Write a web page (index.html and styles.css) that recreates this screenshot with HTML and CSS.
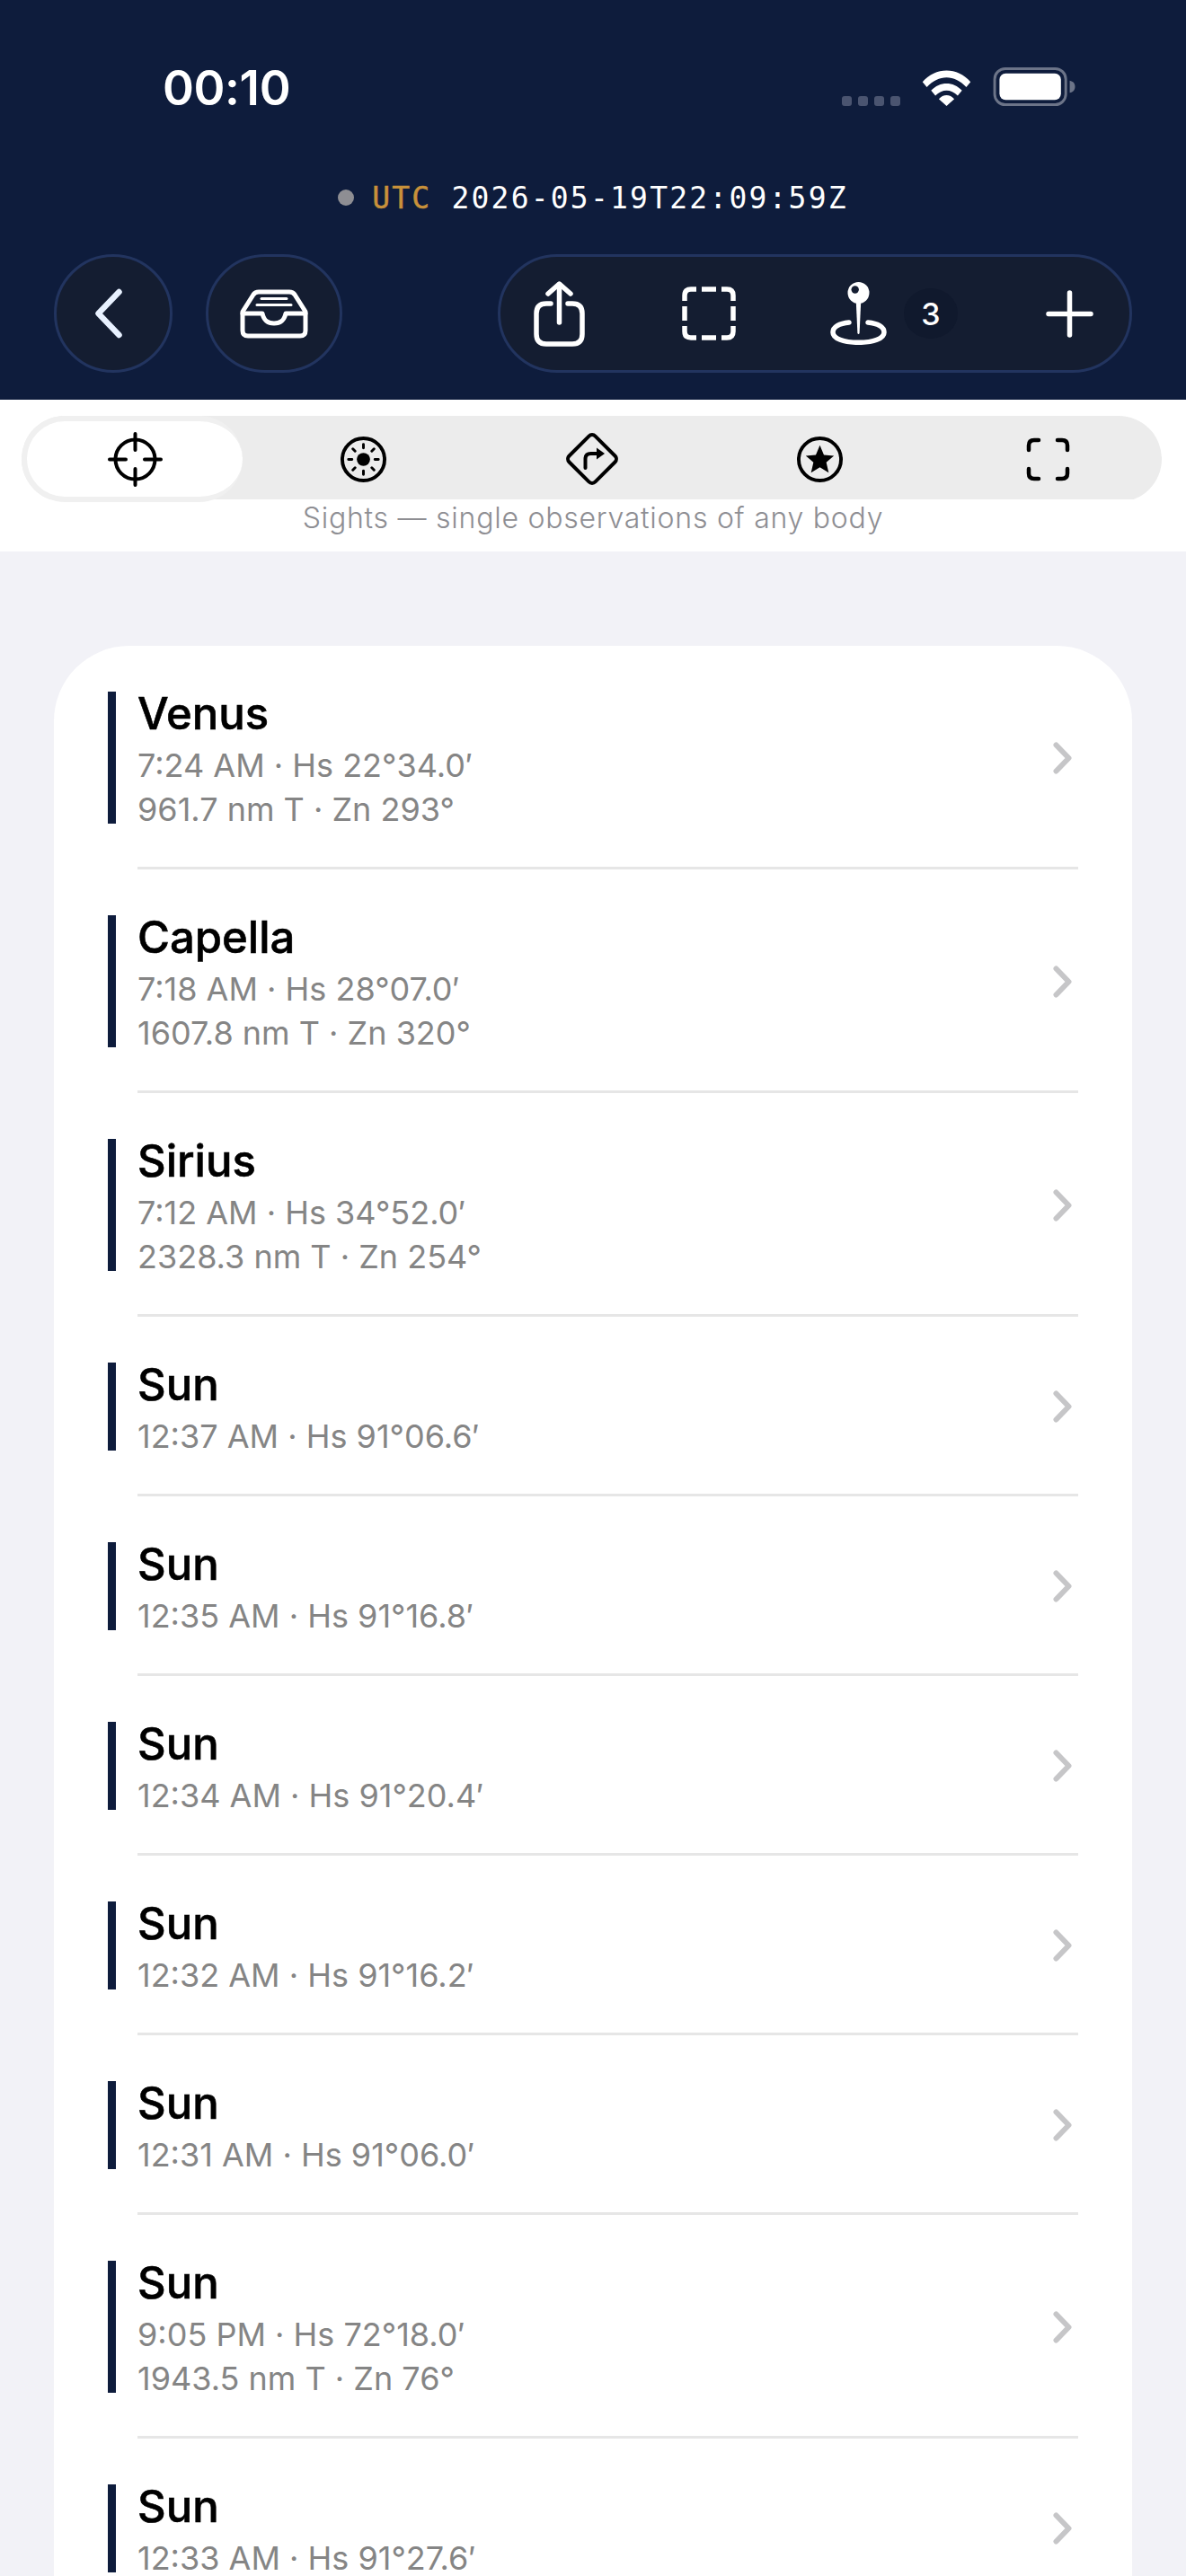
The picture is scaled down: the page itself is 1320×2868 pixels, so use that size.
FILE: index.html
```html
<!doctype html>
<html>
  <head>
    <title>Sights</title>
    <link rel="stylesheet" href="styles.css">
  </head>
  <body>
    <header class="top">
      <div class="status">
        <span class="clock">00:10</span>
        <div class="status-icons">
          <svg width="65" height="11" viewBox="0 0 65 11"><g fill="#4a5470"><rect x="0" y="0" width="11" height="11" rx="3"/><rect x="18" y="0" width="11" height="11" rx="3"/><rect x="36" y="0" width="11" height="11" rx="3"/><rect x="54" y="0" width="11" height="11" rx="3"/></g></svg>
          <svg width="57" height="42" viewBox="0 0 58 44"><path d="M1 16 C16 -2 42 -2 57 16 L52 22 C38 7 20 7 6 22 Z M11 26 C21 15 37 15 47 26 L42 32 C34 24 24 24 16 32 Z M20 36 C25 30 33 30 38 36 L29 44 Z" fill="#fff"/></svg>
          <svg width="93" height="43" viewBox="0 0 94 44"><rect x="1.5" y="1.5" width="81" height="41" rx="12" fill="none" stroke="#6c7488" stroke-width="3"/><rect x="7" y="7" width="70" height="30" rx="7" fill="#fff"/><path d="M87 15 C91 16 93 18 93 22 C93 26 91 28 87 29 Z" fill="#6c7488"/></svg>
        </div>
      </div>
      <div class="utc">
        <span class="utc-dot"></span>
        <span class="utc-text"><span class="utc-label">UTC</span> 2026-05-19T22:09:59Z</span>
      </div>
      <div class="toolbar">
        <button class="glass back">
          <svg width="32" height="56" viewBox="0 0 32 56"><path d="M27.5 4 L4.5 28 L27.5 52" fill="none" stroke="#e8f1ff" stroke-width="6.5" stroke-linecap="round" stroke-linejoin="round"/></svg>
        </button>
        <button class="glass inbox">
          <svg width="76" height="55" viewBox="0 0 76 55"><g fill="none" stroke="#fff" stroke-width="5" stroke-linecap="round" stroke-linejoin="round"><path d="M3 25 L15 6 Q17 3 21 3 H55 Q59 3 61 6 L73 25 V46 Q73 52 67 52 H9 Q3 52 3 46 Z"/><path d="M3 27 H25 C27 36 32 38 38 38 C44 38 49 36 51 27 H73"/></g><g stroke="#fff" stroke-width="3" stroke-linecap="round"><path d="M24 10.5 H52"/><path d="M19 17.5 H57"/></g></svg>
        </button>
        <div class="glass tools">
          <svg width="57" height="73" viewBox="0 0 57 73"><g fill="none" stroke="#fff" stroke-width="5.5" stroke-linecap="round" stroke-linejoin="round"><path d="M19 25 H14 Q3 25 3 36 V59 Q3 70 14 70 H43 Q54 70 54 59 V36 Q54 25 43 25 H38"/><path d="M28.5 46 V4"/><path d="M16 14 L28.5 3 L41 14"/></g></svg>
          <svg class="tool-dash" width="60" height="60" viewBox="0 0 60 60"><g fill="none" stroke="#fff" stroke-width="5.5"><path d="M3 16 V10 Q3 3 10 3 H16"/><path d="M22 3 H38"/><path d="M44 3 H50 Q57 3 57 10 V16"/><path d="M57 22 V38"/><path d="M57 44 V50 Q57 57 50 57 H44"/><path d="M38 57 H22"/><path d="M16 57 H10 Q3 57 3 50 V44"/><path d="M3 38 V22"/></g></svg>
          <div class="tool-pin">
            <svg width="63" height="70" viewBox="0 0 63 70"><circle cx="31.5" cy="12" r="12" fill="#fff"/><circle cx="27.7" cy="8.5" r="4.2" fill="#141d31"/><path d="M28.7 20 H34.3 L32.6 57 Q31.5 59 30.4 57 Z" fill="#fff"/><path d="M21 45 C10 46 3 50 3 56 C3 63 15 67.3 31.5 67.3 C48 67.3 60 63 60 56 C60 50 53 46 42 45" fill="none" stroke="#fff" stroke-width="5.5" stroke-linecap="round"/></svg>
            <span class="pin-count">3</span>
          </div>
          <svg class="tool-plus" width="53" height="53" viewBox="0 0 53 53"><path d="M26.5 3 V50 M3 26.5 H50" stroke="#fff" stroke-width="5.5" stroke-linecap="round"/></svg>
        </div>
      </div>
    </header>

    <section class="picker">
      <div class="tabs">
        <div class="tab tab-on">
          <svg width="61" height="61" viewBox="0 0 61 61"><g fill="none" stroke="#000" stroke-width="4" stroke-linecap="round"><circle cx="30.5" cy="30.5" r="22"/><path d="M30.5 2 V20 M30.5 41 V59 M2 30.5 H20 M41 30.5 H59"/></g></svg>
        </div>
        <div class="tab">
          <svg width="51" height="51" viewBox="0 0 52 52"><circle cx="26" cy="26" r="24" fill="none" stroke="#000" stroke-width="4"/><circle cx="26" cy="26" r="7.5" fill="#000"/><path d="M26 9 V13 M26 39 V43 M9 26 H13 M39 26 H43 M14 14 L16.5 16.5 M35.5 35.5 L38 38 M38 14 L35.5 16.5 M16.5 35.5 L14 38" stroke="#000" stroke-width="3" stroke-linecap="round"/></svg>
        </div>
        <div class="tab">
          <svg width="58" height="58" viewBox="0 0 58 58"><g fill="none" stroke="#000" stroke-linejoin="round" stroke-linecap="round" stroke-width="4"><rect x="8.5" y="8.5" width="41" height="41" rx="5" transform="rotate(45 29 29)"/><path d="M21.5 39 V29 Q21.5 23 27.5 23 H36"/></g><path d="M34 16.5 L43 23 L34 29.5 Z" fill="#000"/></svg>
        </div>
        <div class="tab">
          <svg width="51" height="51" viewBox="0 0 52 52"><circle cx="26" cy="26" r="24" fill="none" stroke="#000" stroke-width="4"/><path d="M26 10 L30.6 20.8 L42 21.8 L33.3 29.4 L36 41 L26 35 L16 41 L18.7 29.4 L10 21.8 L21.4 20.8 Z" fill="#000"/></svg>
        </div>
        <div class="tab">
          <svg width="49" height="49" viewBox="0 0 49 49"><g fill="none" stroke="#000" stroke-width="4.5" stroke-linecap="round"><path d="M3 14 V9 Q3 3 9 3 H14"/><path d="M35 3 H40 Q46 3 46 9 V14"/><path d="M46 35 V40 Q46 46 40 46 H35"/><path d="M14 46 H9 Q3 46 3 40 V35"/></g></svg>
        </div>
      </div>
      <p class="hint">Sights — single observations of any body</p>
    </section>

    <main class="content">
      <ul class="card">
        <li class="row"><span class="bar"></span><div class="row-text"><div class="name">Venus</div><div class="meta">7:24 AM · Hs 22°34.0′</div><div class="meta">961.7 nm T · Zn 293°</div></div><svg class="chev" width="21" height="36" viewBox="0 0 21 36"><path d="M3.5 3.5 L17.5 18 L3.5 32.5" fill="none" stroke="#c6c6c8" stroke-width="6" stroke-linecap="round" stroke-linejoin="round"/></svg></li>
        <li class="row"><span class="bar"></span><div class="row-text"><div class="name">Capella</div><div class="meta">7:18 AM · Hs 28°07.0′</div><div class="meta">1607.8 nm T · Zn 320°</div></div><svg class="chev" width="21" height="36" viewBox="0 0 21 36"><path d="M3.5 3.5 L17.5 18 L3.5 32.5" fill="none" stroke="#c6c6c8" stroke-width="6" stroke-linecap="round" stroke-linejoin="round"/></svg></li>
        <li class="row"><span class="bar"></span><div class="row-text"><div class="name">Sirius</div><div class="meta">7:12 AM · Hs 34°52.0′</div><div class="meta">2328.3 nm T · Zn 254°</div></div><svg class="chev" width="21" height="36" viewBox="0 0 21 36"><path d="M3.5 3.5 L17.5 18 L3.5 32.5" fill="none" stroke="#c6c6c8" stroke-width="6" stroke-linecap="round" stroke-linejoin="round"/></svg></li>
        <li class="row"><span class="bar"></span><div class="row-text"><div class="name">Sun</div><div class="meta">12:37 AM · Hs 91°06.6′</div></div><svg class="chev" width="21" height="36" viewBox="0 0 21 36"><path d="M3.5 3.5 L17.5 18 L3.5 32.5" fill="none" stroke="#c6c6c8" stroke-width="6" stroke-linecap="round" stroke-linejoin="round"/></svg></li>
        <li class="row"><span class="bar"></span><div class="row-text"><div class="name">Sun</div><div class="meta">12:35 AM · Hs 91°16.8′</div></div><svg class="chev" width="21" height="36" viewBox="0 0 21 36"><path d="M3.5 3.5 L17.5 18 L3.5 32.5" fill="none" stroke="#c6c6c8" stroke-width="6" stroke-linecap="round" stroke-linejoin="round"/></svg></li>
        <li class="row"><span class="bar"></span><div class="row-text"><div class="name">Sun</div><div class="meta">12:34 AM · Hs 91°20.4′</div></div><svg class="chev" width="21" height="36" viewBox="0 0 21 36"><path d="M3.5 3.5 L17.5 18 L3.5 32.5" fill="none" stroke="#c6c6c8" stroke-width="6" stroke-linecap="round" stroke-linejoin="round"/></svg></li>
        <li class="row"><span class="bar"></span><div class="row-text"><div class="name">Sun</div><div class="meta">12:32 AM · Hs 91°16.2′</div></div><svg class="chev" width="21" height="36" viewBox="0 0 21 36"><path d="M3.5 3.5 L17.5 18 L3.5 32.5" fill="none" stroke="#c6c6c8" stroke-width="6" stroke-linecap="round" stroke-linejoin="round"/></svg></li>
        <li class="row"><span class="bar"></span><div class="row-text"><div class="name">Sun</div><div class="meta">12:31 AM · Hs 91°06.0′</div></div><svg class="chev" width="21" height="36" viewBox="0 0 21 36"><path d="M3.5 3.5 L17.5 18 L3.5 32.5" fill="none" stroke="#c6c6c8" stroke-width="6" stroke-linecap="round" stroke-linejoin="round"/></svg></li>
        <li class="row"><span class="bar"></span><div class="row-text"><div class="name">Sun</div><div class="meta">9:05 PM · Hs 72°18.0′</div><div class="meta">1943.5 nm T · Zn 76°</div></div><svg class="chev" width="21" height="36" viewBox="0 0 21 36"><path d="M3.5 3.5 L17.5 18 L3.5 32.5" fill="none" stroke="#c6c6c8" stroke-width="6" stroke-linecap="round" stroke-linejoin="round"/></svg></li>
        <li class="row"><span class="bar"></span><div class="row-text"><div class="name">Sun</div><div class="meta">12:33 AM · Hs 91°27.6′</div></div><svg class="chev" width="21" height="36" viewBox="0 0 21 36"><path d="M3.5 3.5 L17.5 18 L3.5 32.5" fill="none" stroke="#c6c6c8" stroke-width="6" stroke-linecap="round" stroke-linejoin="round"/></svg></li>
      </ul>
    </main>
  </body>
</html>
```

FILE: styles.css
```css
* { margin: 0; padding: 0; box-sizing: border-box; }
html, body { height: 2868px; overflow: hidden; }
body { font-family: Inter, "Liberation Sans", sans-serif; background: #f2f2f7; color: #000; }

/* Header */
.top { height: 445px; background: #0e1c3c; color: #fff; padding: 0 60px; display: flex; flex-direction: column; }

.status { height: 195px; display: flex; align-items: center; justify-content: space-between; padding: 0 62px 0 121px; }
.clock { font-size: 53px; font-weight: 600; letter-spacing: -0.4px; }
.status-icons { display: flex; align-items: flex-end; gap: 23px; margin-bottom: 2px; }

.utc { display: flex; align-items: center; justify-content: center; gap: 20px; height: 50px; margin-bottom: 38px; }
.utc-dot { width: 18px; height: 18px; border-radius: 50%; background: #8e8e93; }
.utc-text { font-family: "DejaVu Sans Mono", "Liberation Mono", monospace; font-size: 33px; letter-spacing: 2.2px; }
.utc-label { color: #c8913a; -webkit-text-stroke: 0.5px #c8913a; }

.toolbar { display: flex; align-items: stretch; gap: 37px; height: 132px; }
.glass { background: #141d31; border: 3px solid #22345f; display: flex; align-items: center; border-radius: 66px; }
button.glass { justify-content: center; }
.back { width: 132px; padding-right: 10px; }
.inbox { width: 152px; }
.tools { margin-left: auto; width: 706px; padding-left: 37px; }
.tool-dash { margin-left: 108px; }
.tool-pin { display: flex; align-items: center; gap: 19px; margin-left: 105px; }
.tool-plus { margin-left: 98px; }
.pin-count { width: 60px; height: 56px; border-radius: 50%; background: #10192d; display: flex; align-items: center; justify-content: center; font-size: 34px; font-weight: 500; }

/* Picker */
.picker { background: #fff; height: 169px; padding: 18px 27px 0 24px; }
.tabs { display: flex; height: 96px; background: #ececec; border-radius: 48px; }
.tab { flex: 1; display: flex; align-items: center; justify-content: center; }
.tab-on { flex: 0 0 246px; margin-right: 8px; background: #fff; border: 6px solid #f0f0f0; border-right: 0; border-radius: 48px; }
.hint { margin: -3px -27px 0 -24px; background: #fff; text-align: center; color: #8e8e93; font-size: 32px; line-height: 42px; letter-spacing: 0.75px; font-weight: 300; }

/* List */
.content { padding: 105px 60px 0; }
.card { list-style: none; background: #fff; border-radius: 84px 84px 0 0; padding: 0 60px; }
.row { display: flex; align-items: center; position: relative; padding: 51px 0; gap: 24px; }
.row::after { content: ""; position: absolute; left: 33px; right: 0; bottom: 0; height: 3px; background: #e6e6e6; }
.bar { width: 9px; align-self: stretch; background: #0e1c3c; }
.row-text { flex: 1; margin-bottom: -9px; }
.name { font-size: 49px; font-weight: 500; -webkit-text-stroke: 0.6px #000; line-height: 48px; padding-top: 1px; margin-bottom: 9px; }
.meta { font-size: 36px; line-height: 49px; color: #858585; }
.chev { margin-right: 7px; }
```
